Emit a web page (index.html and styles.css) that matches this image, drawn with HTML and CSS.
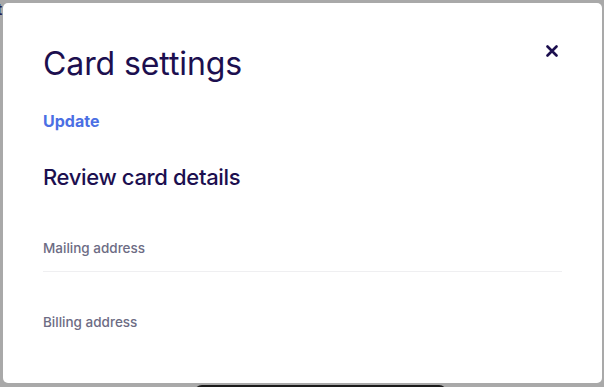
FILE: index.html
```html
<!DOCTYPE html>
<html lang="en">
<head>
<meta charset="utf-8">
<title>Card settings</title>
<link rel="stylesheet" href="styles.css">
</head>
<body>
<div class="page">
  <span class="peek-text">t</span>
  <div class="peek-bar"></div>
</div>
<div class="modal" role="dialog" aria-labelledby="modal-title">
  <div class="modal-header">
    <h1 id="modal-title" class="modal-title">Card settings</h1>
    <button class="close-btn" aria-label="Close">
      <svg width="12" height="12" viewBox="0 0 12 12" aria-hidden="true">
        <path d="M1.5 1.5 L10.5 10.5 M10.5 1.5 L1.5 10.5" stroke="#1c0f4f" stroke-width="2.6" stroke-linecap="round" fill="none"/>
      </svg>
    </button>
  </div>
  <a class="update-link" href="#">Update</a>
  <h2 class="section-title">Review card details</h2>
  <div class="field-row field-row--divided">
    <span class="field-label">Mailing address</span>
  </div>
  <div class="field-row">
    <span class="field-label">Billing address</span>
  </div>
</div>
</body>
</html>
```
FILE: styles.css
```css
* { box-sizing: border-box; }

html, body {
  margin: 0;
  padding: 0;
  height: 100%;
}

body {
  background: #a9a9a9;
  font-family: "Inter", "Liberation Sans", sans-serif;
  overflow: hidden;
}

.page {
  position: relative;
  width: 100%;
  height: 100%;
}

.peek-text {
  position: absolute;
  left: -3px;
  top: 0;
  font-size: 15px;
  font-weight: 600;
  color: #241a4c;
}

.peek-bar {
  position: absolute;
  left: 194px;
  top: 385px;
  width: 253px;
  height: 12px;
  background: #1b1b1b;
  border-radius: 8px 8px 0 0;
}

.modal {
  position: fixed;
  left: 3px;
  top: 3px;
  width: 599px;
  height: 380px;
  background: #ffffff;
  border-radius: 5px;
  padding: 41px 40px 0 40px;
  display: flex;
  flex-direction: column;
  align-items: flex-start;
}

.modal-header {
  width: 100%;
  display: flex;
  justify-content: space-between;
  align-items: flex-start;
}

.modal-title {
  margin: 0;
  font-size: 32px;
  line-height: 40px;
  font-weight: 400;
  color: #1c0f4f;
  letter-spacing: -0.1px;
}

.close-btn {
  margin-top: -3px;
  width: 20px;
  height: 20px;
  padding: 0;
  border: 0;
  background: transparent;
  display: flex;
  align-items: center;
  justify-content: center;
  cursor: pointer;
}

.update-link {
  margin-top: 27px;
  font-size: 16px;
  line-height: 20px;
  font-weight: 700;
  color: #4b6fe4;
  text-decoration: none;
}

.section-title {
  margin: 32px 0 0 0;
  font-size: 22px;
  line-height: 28px;
  font-weight: 500;
  color: #1c0f4f;
  letter-spacing: -0.35px;
}

.field-row {
  width: 100%;
  margin-top: 47px;
}

.field-row--divided {
  padding-bottom: 13px;
  border-bottom: 1px solid #efeff1;
}

.field-row--divided + .field-row {
  margin-top: 40px;
}

.field-label {
  display: block;
  font-size: 13.5px;
  line-height: 20px;
  font-weight: 500;
  color: #6d6c84;
}
```
